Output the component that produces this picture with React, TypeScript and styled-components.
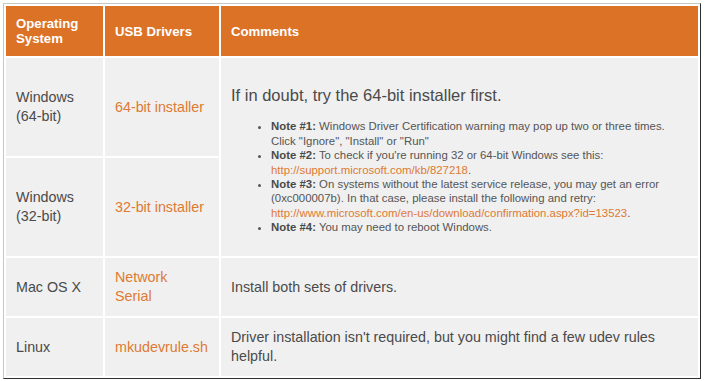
import React from "react";
import styled, { createGlobalStyle } from "styled-components";

const GlobalStyle = createGlobalStyle`
  html, body {
    margin: 0;
    padding: 0;
    background: #fff;
  }
  body {
    font-family: "Liberation Sans", Arial, sans-serif;
    color: #444;
  }
`;

type Note = {
  label: string;
  text: string;
  link?: string;
  after?: string;
};

const NOTES: Note[] = [
  {
    label: "Note #1:",
    text: ' Windows Driver Certification warning may pop up two or three times. Click "Ignore", "Install" or "Run"',
  },
  {
    label: "Note #2:",
    text: " To check if you're running 32 or 64-bit Windows see this: ",
    link: "http://support.microsoft.com/kb/827218",
    after: ".",
  },
  {
    label: "Note #3:",
    text: " On systems without the latest service release, you may get an error (0xc000007b). In that case, please install the following and retry: ",
    link: "http://www.microsoft.com/en-us/download/confirmation.aspx?id=13523",
    after: ".",
  },
  {
    label: "Note #4:",
    text: " You may need to reboot Windows.",
  },
];

function App() {
  return (
    <>
      <GlobalStyle />
      <Page>
        <Table>
          <colgroup>
            <col style={{ width: 97 }} />
            <col style={{ width: 114 }} />
            <col />
          </colgroup>
          <thead>
            <tr>
              <Th>
                Operating
                <br />
                System
              </Th>
              <Th>USB Drivers</Th>
              <Th>Comments</Th>
            </tr>
          </thead>
          <tbody>
            <tr>
              <Td tall>
                Windows
                <br />
                (64-bit)
              </Td>
              <Td tall>
                <Link href="#">64-bit installer</Link>
              </Td>
              <Td rowSpan={2}>
                <Lead>If in doubt, try the 64-bit installer first.</Lead>
                <NoteList>
                  {NOTES.map((n) => (
                    <NoteItem key={n.label}>
                      <b>{n.label}</b>
                      {n.text}
                      {n.link && <Link href="#">{n.link}</Link>}
                      {n.after}
                    </NoteItem>
                  ))}
                </NoteList>
              </Td>
            </tr>
            <tr>
              <Td tall>
                Windows
                <br />
                (32-bit)
              </Td>
              <Td tall>
                <Link href="#">32-bit installer</Link>
              </Td>
            </tr>
            <tr>
              <Td>Mac OS X</Td>
              <Td>
                <Link href="#">Network</Link>
                <br />
                <Link href="#">Serial</Link>
              </Td>
              <Td>Install both sets of drivers.</Td>
            </tr>
            <tr>
              <Td>Linux</Td>
              <Td>
                <Link href="#">mkudevrule.sh</Link>
              </Td>
              <Td>Driver installation isn't required, but you might find a few udev rules helpful.</Td>
            </tr>
          </tbody>
        </Table>
      </Page>
    </>
  );
}

export default App;

const Page = styled.div`
  padding: 3px 0 0 3px;
`;

const Table = styled.table`
  width: 698px;
  table-layout: fixed;
  border-collapse: separate;
  border-spacing: 2px;
  border-style: solid;
  border-width: 1px;
  border-color: #c6c6c6 #2e2e2e #2e2e2e #c6c6c6;
  box-sizing: border-box;
`;

const Th = styled.th`
  background: #dc7226;
  color: #fff;
  font-size: 13.2px;
  line-height: 15px;
  font-weight: bold;
  text-align: left;
  vertical-align: middle;
  padding: 10px 10px;
`;

const Td = styled.td<{ tall?: boolean }>`
  box-sizing: border-box;
  background: #f0f0f0;
  font-size: 14.3px;
  line-height: 19px;
  color: #4a4a4a;
  vertical-align: middle;
  padding: 10px 10px;
  height: ${(p) => (p.tall ? "98px" : "auto")};
`;

const Link = styled.a`
  color: #de7a32;
  text-decoration: none;
`;

const Lead = styled.p`
  margin: 7px 0 14px;
  font-size: 16.5px;
`;

const NoteList = styled.ul`
  margin: 0;
  padding-left: 40px;
  font-size: 11.4px;
  line-height: 14.4px;
  color: #555;
  b {
    color: #4a4a4a;
  }
`;

const NoteItem = styled.li``;
